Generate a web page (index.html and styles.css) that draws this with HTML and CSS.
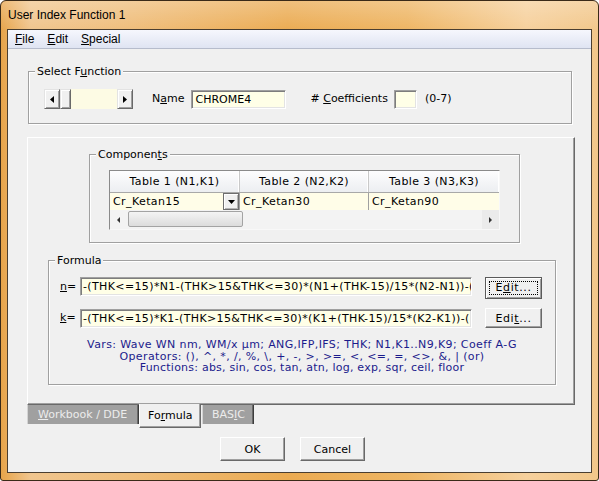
FILE: index.html
```html
<!DOCTYPE html>
<html>
<head>
<meta charset="utf-8">
<title>User Index Function 1</title>
<link rel="stylesheet" href="styles.css">
</head>
<body>
<div class="window">
  <div class="titlebar">User Index Function 1</div>
  <div class="client">
    <div class="menubar">
      <span><u>F</u>ile</span>
      <span><u>E</u>dit</span>
      <span><u>S</u>pecial</span>
    </div>

    <div class="group select-group">
      <span class="legend">Select F<u>u</u>nction</span>
      <div class="select-row">
        <div class="hscroll">
          <span class="btn3d sb-btn"><svg width="4" height="7" viewBox="0 0 4 7"><polygon points="4,0 0,3.5 4,7" fill="#000"/></svg></span>
          <span class="btn3d sb-thumb"></span>
          <span class="sb-track"></span>
          <span class="btn3d sb-btn"><svg width="4" height="7" viewBox="0 0 4 7"><polygon points="0,0 4,3.5 0,7" fill="#000"/></svg></span>
        </div>
        <span class="lbl name-lbl">N<u>a</u>me</span>
        <div class="field name-field">CHROME4</div>
        <span class="lbl coef-lbl"># <u>C</u>oefficients</span>
        <div class="field coef-field"></div>
        <span class="lbl range">(0-7)</span>
      </div>
    </div>

    <div class="panel">
      <div class="group comp-group">
        <span class="legend">Componen<u>t</u>s</span>
        <div class="grid">
          <div class="grid-head">
            <div class="hc c1">Table 1 (N1,K1)</div>
            <div class="hc c2">Table 2 (N2,K2)</div>
            <div class="hc c3">Table 3 (N3,K3)</div>
          </div>
          <div class="grid-row">
            <div class="dc c1"><span class="cell-text">Cr_Ketan15</span><span class="dd-btn"><svg width="7" height="4" viewBox="0 0 7 4"><polygon points="0,0 7,0 3.5,4" fill="#000"/></svg></span></div>
            <div class="dc c2"><span class="cell-text">Cr_Ketan30</span></div>
            <div class="dc c3"><span class="cell-text">Cr_Ketan90</span></div>
          </div>
          <div class="grid-scroll">
            <span class="gs-btn"><svg width="3" height="6" viewBox="0 0 3 6"><polygon points="3,0 0,3 3,6" fill="#333"/></svg></span>
            <span class="gs-thumb"></span>
            <span class="gs-track"></span>
            <span class="gs-btn gs-right"><svg width="3" height="6" viewBox="0 0 3 6"><polygon points="0,0 3,3 0,6" fill="#333"/></svg></span>
          </div>
        </div>
      </div>

      <div class="group formula-group">
        <span class="legend">Formula</span>
        <div class="frow n-row">
          <span class="flabel"><u>n</u>=</span>
          <div class="field ffield">-(THK&lt;=15)*N1-(THK&gt;15&amp;THK&lt;=30)*(N1+(THK-15)/15*(N2-N1))-(</div>
          <div class="btn edit-btn default"><span class="focus">E<u>d</u>it...</span></div>
        </div>
        <div class="frow k-row">
          <span class="flabel"><u>k</u>=</span>
          <div class="field ffield">-(THK&lt;=15)*K1-(THK&gt;15&amp;THK&lt;=30)*(K1+(THK-15)/15*(K2-K1))-(</div>
          <div class="btn edit-btn"><span class="edit-text">Edi<u>t</u>...</span></div>
        </div>
        <div class="vars">
          <div class="v1">Vars: Wave WN nm, WM/x µm; ANG,IFP,IFS; THK; N1,K1..N9,K9; Coeff A-G</div>
          <div class="v2">Operators: (), ^, *, /, %, \, +, -, &gt;, &gt;=, &lt;, &lt;=, =, &lt;&gt;, &amp;, | (or)</div>
          <div class="v3">Functions: abs, sin, cos, tan, atn, log, exp, sqr, ceil, floor</div>
        </div>
      </div>
    </div>

    <div class="tabs">
      <div class="tab tab-wb"><u>W</u>orkbook / DDE</div>
      <div class="tab tab-active tab-fm">Fo<u>r</u>mula</div>
      <div class="tab tab-bs">BAS<u>I</u>C</div>
    </div>

    <div class="buttons">
      <div class="btn dlg-btn">OK</div>
      <div class="btn dlg-btn">Cancel</div>
    </div>
  </div>
</div>
</body>
</html>
```

FILE: styles.css
```css
* { box-sizing: border-box; }

body {
  margin: 0;
  background: #ffffff;
}

.window {
  width: 599px;
  height: 481px;
  border: 1px solid #3a2a18;
  border-radius: 6px 6px 3px 3px;
  padding: 0 6px 7px 6px;
  background:
    linear-gradient(to bottom, rgba(255,255,255,0.25), rgba(255,255,255,0) 30px),
    linear-gradient(to right, #e7a44a 0, #f0c58e 5%, #efbd7a 22%, #ebab52 48%, #eeb563 68%, #f6d09c 88%, #f2c78a 100%);
  display: flex;
  flex-direction: column;
  font-family: "DejaVu Sans", Verdana, sans-serif;
  font-size: 11px;
  color: #000;
  overflow: hidden;
}

.titlebar {
  flex: none;
  height: 28px;
  line-height: 28px;
  padding-left: 1px;
  font-family: "Liberation Sans", Arial, sans-serif;
  font-size: 12px;
  color: #000;
}

.client {
  flex: 1;
  border: 1px solid #4a3e30;
  background: #f0f0f0;
  display: flex;
  flex-direction: column;
}

.menubar {
  flex: none;
  height: 19px;
  border-bottom: 1px solid #b6bccc;
  background: linear-gradient(#f6f7fd, #dfe4f2);
  display: flex;
  gap: 13px;
  padding: 1px 0 0 7px;
  font-family: "Liberation Sans", Arial, sans-serif;
  font-size: 12px;
  line-height: 17px;
}

/* group boxes */
.group {
  position: relative;
  flex: none;
  border: 1px solid #a0a0a0;
  box-shadow: inset 1px 1px 0 #ffffff, 1px 1px 0 #ffffff;
}

.legend {
  position: absolute;
  top: -7px;
  left: 6px;
  padding: 0 2px;
  background: #f0f0f0;
  line-height: 13px;
  white-space: nowrap;
}

.select-group {
  margin: 22px 0 0 20px;
  width: 544px;
  height: 53px;
  padding: 17px 0 0 15px;
}

.select-row {
  display: flex;
  align-items: flex-start;
  height: 20px;
  line-height: 20px;
}

.btn3d {
  background: #f0f0f0;
  border: 1px solid;
  border-color: #e3e3e3 #696969 #696969 #e3e3e3;
  box-shadow: inset 1px 1px 0 #ffffff, inset -1px -1px 0 #a0a0a0;
}

.hscroll {
  display: flex;
  width: 89px;
  height: 20px;
}

.sb-btn {
  width: 16px;
  height: 20px;
  display: flex;
  align-items: center;
  justify-content: center;
}

.sb-thumb {
  width: 11px;
  height: 20px;
}

.sb-track {
  flex: 1;
  background: #fdfbe4;
}

.lbl { white-space: nowrap; }
.name-lbl { margin-left: 19px; }
.coef-lbl { margin-left: 24px; }
.range { margin-left: 8px; }

.field {
  height: 19px;
  background: #ffffe7;
  border: 1px solid;
  border-color: #a0a0a0 #ffffff #ffffff #a0a0a0;
  box-shadow: inset 1px 1px 0 #7d7d7d, inset -1px -1px 0 #e3e3e3;
  padding-left: 3px;
  line-height: 17px;
  white-space: nowrap;
  overflow: hidden;
}

.name-field {
  margin: 1px 0 0 7px;
  width: 95px;
}

.coef-field {
  margin: 1px 0 0 6px;
  width: 23px;
}

/* tab panel */
.panel {
  flex: none;
  margin: 13px 0 0 19px;
  width: 548px;
  height: 268px;
  border: 1px solid;
  border-color: #ffffff #696969 #696969 #ffffff;
  box-shadow: inset -1px -1px 0 #a0a0a0;
  display: flex;
  flex-direction: column;
}

.comp-group {
  margin: 16px 0 0 61px;
  width: 431px;
  height: 89px;
  padding: 15px 0 0 19px;
}

.grid {
  width: 391px;
  height: 60px;
  border: 1px solid;
  border-color: #8a8a8a #f8f8f8 #f8f8f8 #8a8a8a;
  background: #f2f2f2;
  display: flex;
  flex-direction: column;
}

.grid-head {
  display: flex;
  height: 22px;
  border-bottom: 1px solid #a8a8a8;
  background: linear-gradient(#fdfdfe, #eceef1);
  line-height: 21px;
  text-align: center;
  letter-spacing: 0.4px;
}

.hc { border-right: 1px solid #c9c9c9; box-shadow: inset -1px 0 0 #ffffff; white-space: nowrap; }
.c1 { width: 130px; }
.c2 { width: 129px; }
.c3 { flex: 1; border-right: none; }

.grid-row {
  display: flex;
  height: 17px;
  background: #fffde8;
  line-height: 17px;
}

.dc {
  display: flex;
  border-right: 1px solid #a0a0a0;
  padding-left: 3px;
  white-space: nowrap;
}
.dc.c3 { border-right: none; }

.cell-text { flex: 1; letter-spacing: 0.4px; }

.dd-btn {
  width: 16px;
  height: 17px;
  background: #f0f0f0;
  border: 1px solid #6e6e6e;
  box-shadow: inset 1px 1px 0 #ffffff, inset -1px -1px 0 #b4b4b4;
  display: flex;
  align-items: center;
  justify-content: center;
  padding-top: 1px;
}

.grid-scroll {
  display: flex;
  height: 19px;
  background: #f3f3f3;
}

.gs-btn {
  width: 17px;
  height: 19px;
  display: flex;
  align-items: center;
  justify-content: center;
}

.gs-right { background: #ebebeb; }

.gs-thumb {
  width: 115px;
  height: 16px;
  margin: 1px 0 0 1px;
  border: 1px solid #a3a3a3;
  border-radius: 2px;
  background: linear-gradient(#f4f4f4, #dcdcdc);
}

.gs-track { flex: 1; }

/* formula */
.formula-group {
  margin: 17px 0 0 20px;
  width: 508px;
  height: 125px;
  padding-top: 16px;
}

.frow {
  display: flex;
  align-items: flex-start;
}

.n-row { height: 22px; }
.k-row { height: 20px; margin-top: 9px; }

.flabel {
  width: 31px;
  padding-left: 11px;
  white-space: nowrap;
}
.n-row .flabel { line-height: 19px; }
.k-row .flabel { line-height: 20px; }

.ffield {
  width: 392px;
  padding-left: 2px;
  letter-spacing: 0.37px;
}
.k-row .ffield { margin-top: 1px; }

.btn {
  background: #f0f0f0;
  border: 1px solid;
  border-color: #ffffff #696969 #696969 #ffffff;
  box-shadow: inset -1px -1px 0 #a0a0a0;
  display: flex;
  align-items: center;
  justify-content: center;
  white-space: nowrap;
}

.edit-btn {
  width: 57px;
  height: 20px;
  margin-left: 13px;
}

.edit-btn.default {
  height: 22px;
  border: 1px solid #5a5a5a;
  box-shadow: inset 1px 1px 0 #ffffff, inset -1px -1px 0 #a0a0a0;
  padding-bottom: 1px;
}

.focus {
  display: flex;
  align-items: center;
  justify-content: center;
  border: 1px dotted #000;
  width: 49px;
  height: 14px;
  letter-spacing: 0.6px;
}

.edit-text {
  letter-spacing: 0.6px;
}

.vars {
  margin-top: 11px;
  text-align: center;
  line-height: 11.6px;
  color: #1b1b8c;
  white-space: nowrap;
}

.v1, .v2 { letter-spacing: 0.38px; }
.v3 { letter-spacing: 0.23px; }

/* tabs */
.tabs {
  flex: none;
  display: flex;
  align-items: flex-start;
  margin: -1px 0 0 19px;
  height: 24px;
}

.tab {
  margin-top: 1px;
  height: 19px;
  background: #a0a0a0;
  color: #ececec;
  border-left: 1px solid #d4d4d4;
  border-right: 1px solid #3c3c3c;
  box-shadow: inset -1px 0 0 #6a6a6a;
  line-height: 13px;
  padding-top: 3px;
  white-space: nowrap;
}

.tab-wb { width: 112px; padding-left: 10px; }
.tab-bs { width: 52px; padding-left: 9px; margin-left: 1px; }

.tab-active {
  margin-top: 0;
  height: 24px;
  background: #f0f0f0;
  color: #000;
  border-left: 1px solid #ffffff;
  border-right: 1px solid #696969;
  border-bottom: 1px solid #696969;
  box-shadow: inset -1px -1px 0 #a0a0a0;
  padding-top: 5px;
}

.tab-fm { width: 62px; padding-left: 8px; }

/* dialog buttons */
.buttons {
  flex: none;
  display: flex;
  gap: 15px;
  margin: 9px 0 0 212px;
}

.dlg-btn {
  width: 65px;
  height: 24px;
}
```
